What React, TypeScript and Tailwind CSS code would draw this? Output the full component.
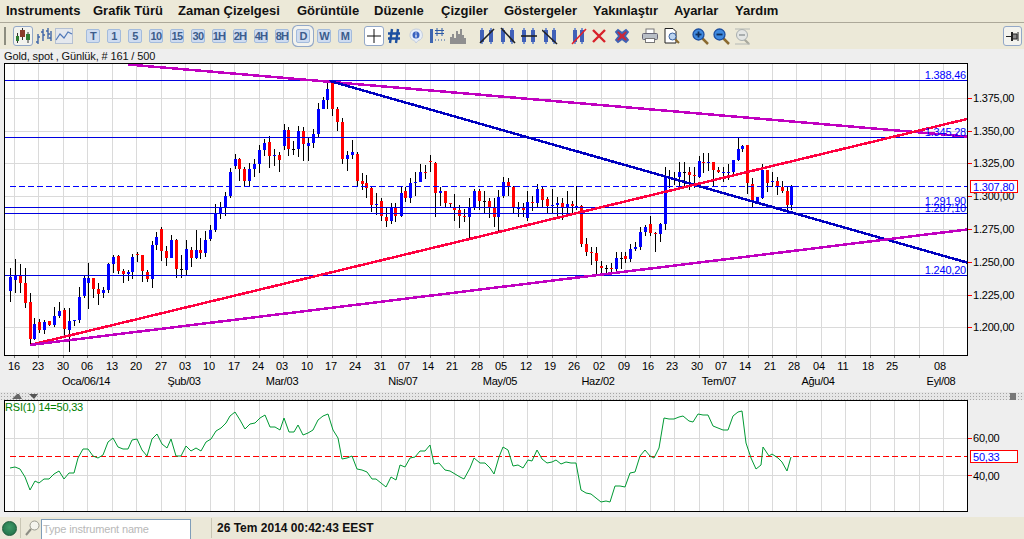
const FONT = "font-['Liberation_Sans',Arial,sans-serif]";

// x, high, body top, body bottom, low, colour (page pixels)
type Candle = [number, number, number, number, number, string];
const candles: Candle[] = [
  [10, 268, 277, 291, 302, 'b'], [15, 259, 276, 280, 293, 'b'], [20, 264, 276, 283, 293, 'r'], [25, 268, 283, 303, 308, 'r'],
  [30, 293, 302, 339, 345, 'r'], [34, 318, 324, 339, 340, 'b'], [39, 319, 322, 330, 333, 'r'], [44, 320, 322, 330, 334, 'b'],
  [49, 321, 321, 325, 326, 'r'], [54, 307, 316, 325, 327, 'b'], [59, 302, 311, 316, 318, 'b'], [64, 308, 310, 329, 337, 'r'],
  [69, 308, 321, 330, 352, 'b'], [74, 320, 320, 321, 326, 'b'], [79, 287, 297, 320, 323, 'b'], [84, 275, 278, 296, 298, 'b'],
  [88, 263, 278, 283, 309, 'b'], [93, 278, 278, 289, 298, 'r'], [98, 283, 289, 294, 305, 'r'], [103, 287, 290, 293, 298, 'b'],
  [108, 263, 264, 290, 293, 'b'], [113, 255, 257, 264, 273, 'b'], [118, 255, 256, 271, 274, 'r'], [123, 269, 271, 274, 283, 'r'],
  [128, 270, 272, 274, 281, 'b'], [132, 254, 257, 272, 279, 'b'], [137, 252, 254, 255, 262, 'r'], [142, 255, 255, 271, 282, 'r'],
  [147, 270, 272, 279, 282, 'r'], [152, 241, 245, 279, 288, 'b'], [156, 232, 237, 245, 250, 'b'], [161, 227, 229, 251, 261, 'r'],
  [166, 246, 251, 258, 266, 'r'], [171, 235, 240, 258, 258, 'b'], [176, 239, 240, 269, 278, 'r'], [181, 255, 269, 270, 278, 'k'],
  [186, 240, 249, 270, 275, 'b'], [191, 247, 250, 258, 267, 'r'], [196, 230, 250, 258, 259, 'b'], [200, 238, 250, 253, 259, 'r'],
  [205, 231, 240, 253, 257, 'b'], [210, 225, 230, 239, 241, 'b'], [215, 204, 213, 230, 232, 'b'], [220, 202, 207, 213, 219, 'b'],
  [225, 192, 196, 207, 216, 'b'], [230, 168, 172, 196, 198, 'b'], [235, 154, 159, 166, 169, 'b'], [239, 158, 159, 169, 181, 'r'],
  [244, 167, 169, 181, 186, 'r'], [249, 163, 169, 181, 187, 'b'], [254, 159, 164, 169, 177, 'b'], [259, 145, 150, 164, 173, 'b'],
  [264, 139, 143, 150, 156, 'b'], [269, 136, 142, 156, 168, 'r'], [274, 149, 155, 156, 166, 'b'], [279, 152, 155, 160, 172, 'r'],
  [284, 124, 130, 146, 150, 'b'], [288, 127, 130, 149, 156, 'r'], [293, 141, 149, 150, 155, 'k'], [298, 126, 131, 149, 157, 'b'],
  [303, 127, 131, 144, 161, 'r'], [308, 138, 143, 146, 161, 'b'], [313, 129, 134, 143, 148, 'b'], [318, 103, 109, 134, 137, 'b'],
  [323, 97, 100, 109, 109, 'b'], [327, 82, 89, 100, 109, 'b'], [332, 82, 83, 109, 116, 'r'], [337, 107, 109, 122, 131, 'r'],
  [342, 118, 122, 159, 164, 'r'], [347, 151, 155, 159, 171, 'b'], [352, 140, 152, 155, 159, 'b'], [357, 152, 154, 181, 187, 'r'],
  [362, 173, 181, 184, 190, 'r'], [366, 175, 183, 188, 198, 'r'], [371, 187, 188, 205, 212, 'r'], [376, 193, 204, 205, 215, 'b'],
  [381, 198, 201, 216, 221, 'r'], [386, 208, 217, 221, 227, 'r'], [391, 203, 207, 221, 224, 'b'], [395, 203, 208, 216, 222, 'r'],
  [401, 187, 193, 216, 217, 'b'], [405, 187, 191, 198, 202, 'r'], [410, 178, 183, 198, 203, 'b'], [415, 172, 182, 183, 196, 'b'],
  [420, 164, 172, 182, 182, 'b'], [425, 165, 172, 173, 179, 'r'], [430, 155, 161, 162, 172, 'r'], [435, 162, 163, 193, 217, 'r'],
  [440, 187, 191, 193, 206, 'b'], [445, 191, 191, 203, 207, 'r'], [450, 203, 203, 204, 207, 'r'], [454, 194, 208, 210, 221, 'r'],
  [459, 205, 210, 216, 228, 'r'], [464, 209, 216, 217, 222, 'r'], [469, 198, 208, 217, 238, 'b'], [474, 189, 191, 208, 210, 'b'],
  [479, 189, 191, 201, 210, 'r'], [484, 191, 201, 202, 214, 'k'], [489, 198, 201, 207, 218, 'r'], [494, 198, 208, 217, 227, 'r'],
  [498, 190, 197, 217, 231, 'b'], [503, 177, 182, 196, 198, 'b'], [508, 178, 182, 186, 196, 'r'], [513, 186, 187, 208, 214, 'r'],
  [518, 202, 208, 209, 217, 'b'], [523, 203, 208, 210, 217, 'r'], [527, 191, 202, 218, 221, 'b'], [532, 196, 202, 203, 211, 'r'],
  [537, 184, 189, 203, 208, 'b'], [542, 186, 189, 200, 208, 'r'], [547, 197, 199, 206, 213, 'r'], [552, 189, 205, 206, 213, 'b'],
  [557, 197, 203, 205, 216, 'b'], [562, 198, 203, 207, 220, 'r'], [567, 191, 204, 207, 217, 'b'], [572, 201, 204, 206, 213, 'r'],
  [576, 186, 206, 208, 210, 'b'], [581, 205, 206, 244, 247, 'r'], [586, 238, 244, 252, 256, 'r'], [591, 247, 252, 253, 265, 'r'],
  [596, 247, 253, 261, 274, 'r'], [601, 261, 266, 268, 274, 'r'], [606, 265, 268, 269, 273, 'k'], [611, 263, 268, 269, 274, 'r'],
  [616, 252, 258, 269, 274, 'b'], [621, 252, 258, 259, 269, 'k'], [625, 252, 256, 259, 263, 'r'], [630, 244, 249, 259, 262, 'b'],
  [635, 242, 247, 249, 251, 'b'], [640, 227, 232, 247, 250, 'b'], [645, 225, 227, 232, 236, 'b'], [650, 216, 224, 233, 236, 'r'],
  [655, 232, 233, 234, 252, 'r'], [660, 223, 224, 234, 242, 'b'], [665, 167, 177, 224, 230, 'b'], [669, 170, 178, 179, 188, 'k'],
  [674, 172, 178, 179, 185, 'k'], [679, 162, 172, 177, 187, 'b'], [684, 162, 172, 173, 188, 'k'], [689, 167, 172, 175, 190, 'r'],
  [694, 167, 175, 176, 188, 'r'], [699, 156, 161, 177, 178, 'b'], [703, 153, 162, 163, 173, 'r'], [708, 153, 162, 163, 171, 'b'],
  [713, 162, 162, 170, 186, 'r'], [718, 167, 170, 172, 173, 'r'], [723, 167, 172, 173, 182, 'b'], [728, 164, 172, 173, 180, 'b'],
  [733, 160, 160, 172, 175, 'b'], [738, 138, 149, 160, 161, 'b'], [742, 145, 146, 149, 152, 'b'], [747, 145, 145, 183, 194, 'r'],
  [752, 178, 184, 202, 207, 'r'], [757, 197, 197, 202, 203, 'b'], [762, 164, 170, 198, 199, 'b'], [767, 170, 170, 183, 192, 'r'],
  [772, 172, 181, 182, 187, 'b'], [777, 177, 181, 186, 195, 'r'], [782, 181, 187, 191, 193, 'r'], [787, 187, 191, 205, 211, 'r'],
  [791, 185, 186, 205, 210, 'b'],
];

const rsi =
  '10,468 15,467 20,469 25,477 30,490 35,481 39,483 44,479 49,479 54,474 59,471 64,479 69,473 74,473 78,458 83,449 88,449 93,456 98,458 103,455 108,442 113,438 118,447 123,449 128,449 132,440 137,439 142,450 147,456 152,439 157,434 162,444 167,448 171,439 176,456 181,456 186,446 191,451 196,448 201,451 206,442 211,439 216,431 221,428 226,423 230,416 235,412 240,420 245,429 250,424 255,423 260,418 265,415 270,427 275,427 280,430 284,418 289,432 294,432 298,425 303,435 308,433 313,430 318,420 323,416 328,414 333,430 338,438 342,459 347,458 352,456 357,469 362,470 367,472 372,479 376,479 381,483 386,487 391,477 396,480 400,465 405,467 410,458 415,457 420,451 425,451 430,445 434,464 439,463 445,470 450,471 455,474 460,477 464,479 470,468 474,458 480,463 485,463 490,468 494,474 499,457 503,447 508,450 513,466 518,465 523,468 528,460 532,461 537,450 542,459 547,463 552,462 556,460 561,464 566,462 571,463 576,463 581,490 586,493 591,494 596,498 601,502 606,501 610,502 615,486 620,486 625,487 630,473 635,472 640,456 645,450 650,456 654,458 659,448 664,418 669,419 674,419 679,417 683,416 689,421 693,422 698,414 703,415 708,415 713,426 718,428 723,430 728,430 733,416 738,412 742,411 746,443 751,458 756,469 761,465 763,447 769,456 772,454 778,458 782,462 787,471 791,457';

const gridX = Array.from({ length: 39 }, (_, i) => Math.round(14 + 24.45 * i));
const dayLabels: [number, string][] = [
  [14, '16'], [38, '23'], [63, '30'], [87, '06'], [112, '13'], [136, '20'], [161, '27'], [185, '03'], [209, '10'], [234, '17'],
  [258, '24'], [282, '03'], [307, '10'], [331, '17'], [355, '24'], [380, '31'], [404, '07'], [428, '14'], [452, '21'], [477, '28'],
  [501, '05'], [526, '12'], [550, '19'], [574, '26'], [599, '02'], [624, '09'], [648, '16'], [672, '23'], [697, '30'], [721, '07'],
  [745, '14'], [770, '21'], [794, '28'], [819, '04'], [843, '11'], [868, '18'], [892, '25'], [940, '08'],
];
const monthLabels: [number, string][] = [
  [86, 'Oca/06/14'], [184, 'Şub/03'], [282, 'Mar/03'], [403, 'Nis/07'], [500, 'May/05'], [598, 'Haz/02'], [719, 'Tem/07'], [818, 'Ağu/04'], [941, 'Eyl/08'],
];
const priceTicks: [number, string][] = [
  [98, '1.375,00'], [131, '1.350,00'], [163, '1.325,00'], [196, '1.300,00'], [229, '1.275,00'], [262, '1.250,00'], [295, '1.225,00'], [327, '1.200,00'],
];
const priceLines: [number, string, number][] = [
  [80, '1.388,46', 79], [137, '1.345,28', 136], [207, '1.291,90', 205], [213, '1.287,10', 212], [275, '1.240,20', 274],
];

const menu = [
  ['Instruments', 'w-[87px]'], ['Grafik Türü', 'w-[85px]'], ['Zaman Çizelgesi', 'w-[119px]'], ['Görüntüle', 'w-[77px]'], ['Düzenle', 'w-[67px]'],
  ['Çizgiler', 'w-[63px]'], ['Göstergeler', 'w-[89px]'], ['Yakınlaştır', 'w-[81px]'], ['Ayarlar', 'w-[61px]'], ['Yardım', 'w-[60px]'],
];

function TimeButton({ label, active }: { label: string; active?: boolean }) {
  return (
    <div
      className={`flex h-[14px] w-[14px] items-center justify-center rounded-[2px] border border-[#a3bbdc] bg-[#cfdcf0] text-[11px] font-bold leading-none tracking-[-0.7px] text-[#3c5c8c] ${
        active ? 'shadow-[0_0_0_3px_#f3f3ee,0_0_0_4px_#93a8c8]' : ''
      }`}
    >
      {label}
    </div>
  );
}

function TrendIcon({ line, bars, stroke = '#222' }: { line: string; bars: number[]; stroke?: string }) {
  return (
    <svg width="16" height="18" viewBox="0 0 16 18">
      {bars.map((x) => (
        <g key={x}>
          <rect x={x} y="1" width="2" height="16" fill="#7a95d0" />
          <rect x={x - 1} y="3" width="4" height="12" fill="#4060b8" />
        </g>
      ))}
      <path d={line} stroke={stroke} strokeWidth="1.6" fill="none" />
    </svg>
  );
}

function Magnifier({ sign }: { sign: 'plus' | 'minus' }) {
  return (
    <svg width="17" height="17" viewBox="0 0 17 17">
      <path d="M10 10l6 6" stroke="#8a6a30" strokeWidth="2.500" />
      <circle cx="6.500" cy="6.500" r="5.500" fill="#3f8ae0" stroke="#1f4f9f" strokeWidth="1.300" />
      <path d="M3.500 6.500h6" stroke="#10305f" strokeWidth="1.800" />
      {sign === 'plus' && <path d="M6.500 3.500v6" stroke="#10305f" strokeWidth="1.800" />}
    </svg>
  );
}

function Toolbar() {
  return (
    <div className="flex h-[26px] items-center bg-[#ece9d8]">
      <div className="ml-[4px] h-[18px] w-[2px] bg-[radial-gradient(#8d8d80_1px,transparent_1px)] bg-[size:2px_3px]" />
      <div className="ml-[7px] flex h-[20px] w-[20px] items-center justify-center rounded-[3px] border border-[#93a8c8] bg-[#f3f3ee]">
        <svg width="16" height="16" viewBox="0 0 16 16">
          <path d="M2.500 5v10M7.500 0v12M13 4v11" stroke="#333" />
          <rect x="1" y="8" width="3" height="5" fill="#2e7d32" />
          <rect x="5" y="2" width="5" height="7" fill="#8a3a2a" />
          <rect x="11" y="6" width="4" height="6" fill="#2e7d32" />
        </svg>
      </div>
      <svg className="ml-[2px]" width="18" height="18" viewBox="0 0 18 18">
        <path d="M3 7v10M1 15h2M3 10h2M8 2v12M6 5h2M8 8h2M13 1v11M11 4h2M13 7h2M16 4v10M14 11h2" stroke="#3f66a8" strokeWidth="1.400" fill="none" />
      </svg>
      <svg className="ml-[2px]" width="18" height="16" viewBox="0 0 18 16">
        <rect x="0.500" y="0.500" width="17" height="15" fill="#e4e8ee" stroke="#b4c0d2" />
        <path d="M1 12l4-6 4 4 4-6 4 2" stroke="#4f78b8" strokeWidth="1.200" fill="none" />
      </svg>
      <div className={`ml-[13px] flex gap-[7px] ${FONT}`}>
        {['T', '1', '5', '10', '15', '30', '1H', '2H', '4H', '8H'].map((l) => (
          <TimeButton key={l} label={l} />
        ))}
        <TimeButton label="D" active />
        <TimeButton label="W" />
        <TimeButton label="M" />
      </div>
      <div className="ml-[12px] flex h-[20px] w-[20px] items-center justify-center rounded-[3px] border border-[#93a8c8] bg-white">
        <svg width="14" height="14" viewBox="0 0 14 14">
          <path d="M7 0v14M0 7h14" stroke="#111" />
        </svg>
      </div>
      <svg className="ml-[3px]" width="14" height="16" viewBox="0 0 14 16">
        <path d="M5 1L3 15M11 1L9 15M1 5.500h12M1 10.500h12" stroke="#1c4fa0" strokeWidth="2.400" fill="none" />
      </svg>
      <svg className="ml-[7px]" width="16" height="16" viewBox="0 0 16 16">
        <path d="M8 1a6.500 6 0 0 1 2 11.700L8 15l-1.500-2.300A6.500 6 0 0 1 8 1z" fill="#e8eef8" stroke="#c4cede" />
        <circle cx="8" cy="7" r="3.500" fill="#3a62c0" />
        <path d="M8 4.500v1M8 6.500v3" stroke="#fff" strokeWidth="1.200" />
      </svg>
      <svg className="ml-[6px]" width="15" height="18" viewBox="0 0 15 18">
        <path d="M1.500 2v14" stroke="#3f66b0" strokeWidth="3" />
        <path d="M7 1v8M12 1v8M5 3.500h9M5 6.500h9" stroke="#2d5aa6" fill="none" />
        <path d="M5 13h1M8 13h1M11 13h1M14 13h1" stroke="#2d5aa6" />
      </svg>
      <svg className="ml-[5px]" width="16" height="16" viewBox="0 0 16 16">
        <path d="M0 16V9h2V6h2v4h2V3h2v3h2V1h2v6h2v3h2v6z" fill="#8f8f8f" />
      </svg>
      <div className="ml-[13px] flex gap-[5px]">
        <TrendIcon bars={[2, 11]} line="M1 16L15 2" />
        <TrendIcon bars={[2, 11]} line="M1 1L15 16" />
        <TrendIcon bars={[2, 11]} line="M0 9h16" />
        <TrendIcon bars={[3, 11]} line="M0 3L15 17" />
      </div>
      <div className="ml-[13px]">
        <TrendIcon bars={[3, 10]} line="M1 17L15 2" stroke="#e0202a" />
      </div>
      <svg className="ml-[5px]" width="14" height="14" viewBox="0 0 14 14">
        <path d="M1 1l12 12M13 1L1 13" stroke="#d8222a" strokeWidth="2.400" />
      </svg>
      <svg className="ml-[8px]" width="16" height="16" viewBox="0 0 16 16">
        <path d="M2 4l2-2 4 3 4-3 2 2-3 4 3 4-2 2-4-3-4 3-2-2 3-4z" fill="#c8283a" stroke="#3f62b4" strokeWidth="1.800" />
      </svg>
      <svg className="ml-[12px]" width="16" height="16" viewBox="0 0 16 16">
        <rect x="4" y="1" width="8" height="5" fill="#fff" stroke="#777" />
        <rect x="0.500" y="5.500" width="15" height="6" rx="1" fill="#b8bec6" stroke="#667" />
        <rect x="3.500" y="10.500" width="9" height="4" fill="#fff" stroke="#777" />
      </svg>
      <svg className="ml-[6px]" width="16" height="16" viewBox="0 0 16 16">
        <path d="M1 0.500h8l3 3V15H1z" fill="#fff" stroke="#222" />
        <path d="M11 11l4 4" stroke="#8a6a30" strokeWidth="2" />
        <circle cx="8.500" cy="8.500" r="3.500" fill="#bcd4f0" stroke="#3a62a0" />
      </svg>
      <div className="ml-[12px]">
        <Magnifier sign="plus" />
      </div>
      <div className="ml-[4px]">
        <Magnifier sign="minus" />
      </div>
      <svg className="ml-[4px]" width="17" height="17" viewBox="0 0 17 17">
        <path d="M10 11l5 5" stroke="#a8a89c" strokeWidth="2.200" />
        <circle cx="8" cy="7" r="5.500" fill="#e4e6e4" stroke="#a8aeae" />
        <path d="M5 7h6" stroke="#9aa0a0" strokeWidth="1.600" />
        <path d="M1 16h15M1 1h15" stroke="#b4b8b4" />
      </svg>
      <div className="ml-auto mr-[2px] flex h-[20px] w-[19px] items-center justify-center rounded-[3px] border border-[#93a8c8] bg-[#f3f3ee]">
        <svg width="13" height="11" viewBox="0 0 13 11">
          <path d="M0 5.500h5" stroke="#222" />
          <rect x="5" y="1" width="2" height="9" fill="#222" />
          <path d="M7 3h4v5H7" stroke="#222" fill="#888" />
          <path d="M12 1v9" stroke="#222" />
        </svg>
      </div>
    </div>
  );
}

function PriceChart() {
  return (
    <svg className="block" width="1024" height="329" viewBox="0 63 1024 329" fontFamily="'Liberation Sans', Arial, sans-serif" fontSize="11">
      <rect x="4" y="63" width="964" height="293" fill="#fff" />
      <g shapeRendering="crispEdges">
        {gridX.map((x) => (
          <path key={x} d={`M${x + 0.5} 64V355`} stroke="#dadada" />
        ))}
        {priceTicks.map(([y]) => (
          <path key={y} d={`M5 ${y + 0.5}H967`} stroke="#dadada" />
        ))}
        {candles.map(([x, hi, top, bot, lo, c]) => (
          <g key={x}>
            <rect x={x} y={hi} width="1" height={lo - hi} fill="#000" />
            <rect x={x - 1} y={top} width="3" height={Math.max(bot - top, 1)} fill={c === 'b' ? '#0000ff' : c === 'r' ? '#ff0000' : '#000'} />
          </g>
        ))}
        {priceLines.map(([y]) => (
          <path key={y} d={`M5 ${y + 0.5}H967`} stroke="#0000e0" />
        ))}
        <path d="M10 186.500H967" stroke="#0000ff" strokeDasharray="6 3" />
        <path d="M128 64.500L967 136.500" stroke="#c000c0" strokeWidth="2.500" />
        <path d="M330 81L967 262.500" stroke="#0000c0" strokeWidth="2.500" />
        <path d="M30 345L967 119" stroke="#ff0040" strokeWidth="2.500" />
        <path d="M30 345L967 229.500" stroke="#c000c0" strokeWidth="2.500" />
        <rect x="4.500" y="63.500" width="963" height="292" fill="none" stroke="#000" />
        {priceTicks.map(([y]) => (
          <rect key={y} x="968" y={y} width="4" height="1" fill="#ff0000" />
        ))}
        {gridX.slice(0, 38).map((x) => (
          <rect key={x} x={x} y="356" width="1" height="2" fill="#777" />
        ))}
      </g>
      {priceLines.map(([y, label, base]) => (
        <text key={y} x="966" y={base} textAnchor="end" fill="#0000ff" letterSpacing="-0.2">
          {label}
        </text>
      ))}
      {priceTicks.map(([y, label]) => (
        <text key={y} x="973" y={y + 4} fill="#000" letterSpacing="-0.2">
          {label}
        </text>
      ))}
      <rect x="970.500" y="180.500" width="47" height="12" fill="#fff" stroke="#ff0000" shapeRendering="crispEdges" />
      <text x="973" y="191" fill="#0000ff" letterSpacing="-0.2">
        1.307,80
      </text>
      {dayLabels.map(([x, label]) => (
        <text key={x} x={x} y="370" textAnchor="middle" fill="#000">
          {label}
        </text>
      ))}
      {monthLabels.map(([x, label]) => (
        <text key={x} x={x} y="385" textAnchor="middle" fill="#000" letterSpacing="-0.3">
          {label}
        </text>
      ))}
    </svg>
  );
}

function RsiChart() {
  return (
    <svg className="block" width="1024" height="117" viewBox="0 400 1024 117" fontFamily="'Liberation Sans', Arial, sans-serif" fontSize="11">
      <rect x="4" y="400" width="964" height="112" fill="#fff" />
      <g shapeRendering="crispEdges">
        {gridX.map((x) => (
          <path key={x} d={`M${x + 0.5} 401V511`} stroke="#dadada" />
        ))}
        <path d="M5 438.500H967M5 475.500H967" stroke="#dadada" />
      </g>
      <path d="M10 456.500H967" stroke="#ff0000" strokeDasharray="6 3" shapeRendering="crispEdges" />
      <polyline points={rsi} fill="none" stroke="#009933" />
      <g shapeRendering="crispEdges">
        <rect x="4.500" y="400.500" width="963" height="111" fill="none" stroke="#000" />
        <rect x="968" y="438" width="4" height="1" fill="#ff0000" />
        <rect x="968" y="475" width="4" height="1" fill="#ff0000" />
        <rect x="970.500" y="450.500" width="47" height="12" fill="#fff" stroke="#ff0000" />
      </g>
      <text x="5" y="411" fill="#008000" letterSpacing="-0.2">
        RSI(1) 14=50,33
      </text>
      <text x="973" y="442" fill="#000" letterSpacing="-0.2">
        60,00
      </text>
      <text x="973" y="480" fill="#000" letterSpacing="-0.2">
        40,00
      </text>
      <text x="973" y="461" fill="#0000ff" letterSpacing="-0.2">
        50,33
      </text>
    </svg>
  );
}

export default function App() {
  return (
    <div className={`flex h-[539px] w-[1024px] flex-col overflow-hidden bg-[#eeeeee] ${FONT}`}>
      <div className="flex h-[23px] items-center border-b border-[#aca899] bg-[#ece9d8] pl-[6px] text-[13px] font-bold text-[#111]">
        {menu.map(([label, w]) => (
          <span key={label} className={`${w} shrink-0 whitespace-nowrap`}>
            {label}
          </span>
        ))}
      </div>
      <Toolbar />
      <div className="flex h-[14px] items-center pl-[4px] text-[11px] tracking-[-0.13px] text-[#111]">Gold, spot , Günlük, # 161 / 500</div>
      <PriceChart />
      <div className="flex h-[8px] items-center bg-[#e6e6e6] bg-[radial-gradient(#a6a6a6_1px,transparent_1px)] bg-[size:3px_3px] pl-[12px]">
        <svg width="30" height="7" viewBox="0 0 30 7">
          <path d="M0 6L5 1h2l3 5z" fill="#666" />
          <path d="M17 1h9l-4 5z" fill="#555" />
        </svg>
        <div className="ml-auto mr-[8px] h-[7px] w-[6px] bg-[#777]" />
      </div>
      <RsiChart />
      <div className="flex h-[22px] items-center bg-[#ebe8d8]">
        <div className="ml-[2px] h-[15px] w-[15px] rounded-full border border-[#1d5a3a] bg-[radial-gradient(circle_at_50%_40%,#3f9a68,#1d6a44)]" />
        <div className="ml-[3px] h-[20px] w-px bg-[#c9c6b4]" />
        <svg className="ml-[4px]" width="15" height="16" viewBox="0 0 15 16">
          <circle cx="9.500" cy="5.500" r="4.500" fill="#f4f4ee" stroke="#9a9a90" />
          <path d="M6 9l-5 6" stroke="#8d8d84" strokeWidth="2" />
        </svg>
        <div className="ml-px flex h-[20px] w-[150px] items-center self-end border border-b-0 border-[#7f9db9] bg-white pl-px text-[11px] tracking-[-0.15px] text-[#b8b8b8]">
          Type instrument name
        </div>
        <div className="ml-[20px] h-[20px] w-px bg-[#c9c6b4]" />
        <span className="ml-[5px] text-[12px] font-bold text-[#111]">26 Tem 2014 00:42:43 EEST</span>
      </div>
    </div>
  );
}
